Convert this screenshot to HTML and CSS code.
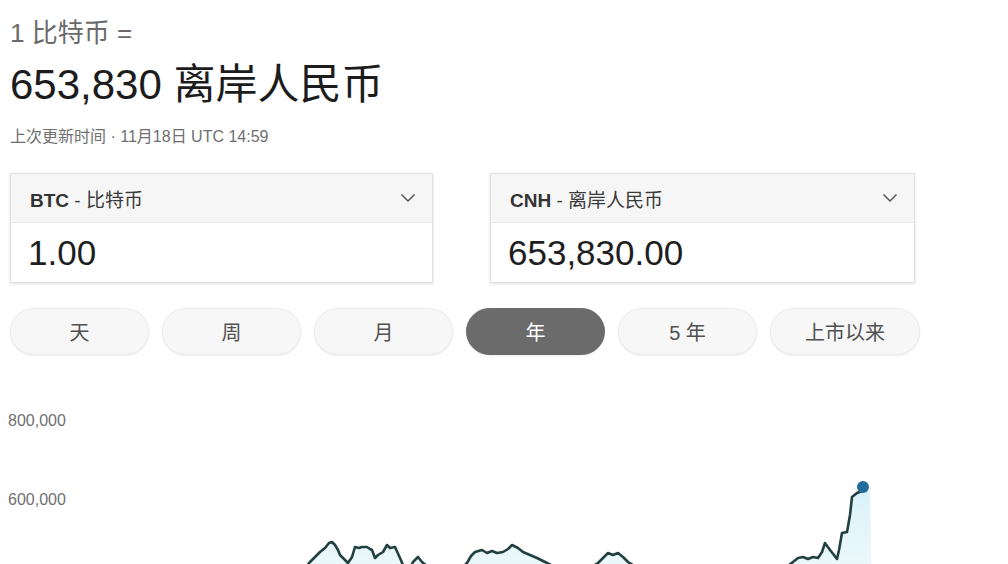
FILE: index.html
```html
<!DOCTYPE html>
<html lang="zh">
<head>
<meta charset="utf-8">
<link rel="stylesheet" href="styles.css">
</head>
<body>
<div class="page">
  <div class="rate-from">1 比特币 =</div>
  <div class="rate-to">653,830 离岸人民币</div>
  <div class="updated">上次更新时间 · 11月18日 UTC 14:59</div>

  <div class="converter">
    <div class="box box-a">
      <div class="box-head">
        <span class="cur"><b>BTC</b> - 比特币</span>
        <svg class="chev" width="16" height="10" viewBox="0 0 16 10"><polyline points="1.5,1.5 8,8 14.5,1.5" fill="none" stroke="#555" stroke-width="1.5"/></svg>
      </div>
      <div class="box-val">1.00</div>
    </div>
    <div class="box box-b">
      <div class="box-head">
        <span class="cur"><b>CNH</b> - 离岸人民币</span>
        <svg class="chev" width="16" height="10" viewBox="0 0 16 10"><polyline points="1.5,1.5 8,8 14.5,1.5" fill="none" stroke="#555" stroke-width="1.5"/></svg>
      </div>
      <div class="box-val">653,830.00</div>
    </div>
  </div>

  <div class="ranges">
    <div class="pill">天</div>
    <div class="pill">周</div>
    <div class="pill">月</div>
    <div class="pill active">年</div>
    <div class="pill">5 年</div>
    <div class="pill">上市以来</div>
  </div>

  <div class="chart">
    <div class="ylabel">800,000</div>
    <div class="ylabel">600,000</div>
    <svg class="plot" viewBox="0 400 1008 164" width="1008" height="164">
      <defs>
        <linearGradient id="fillg" x1="0" y1="0" x2="0" y2="1">
          <stop offset="0" stop-color="#d6f0f8" stop-opacity="0.9"/>
          <stop offset="1" stop-color="#e9f7fb" stop-opacity="0.6"/>
        </linearGradient>
      </defs>
      <path fill="url(#fillg)" stroke="none" d="M300,580 L305,568 L310,562 L315,557 L320,552 L325,548 L329,543 L332,542 L335,545 L338,550 L340,555 L345,560 L348,563 L352,557 L355,547 L359,548 L362,547 L367,547 L370,549 L372,550 L375,558 L378,555 L383,552 L387,545 L390,548 L395,547 L400,558 L403,565 L408,572 L413,562 L415,560 L418,557 L422,562 L427,566 L435,572 L445,575 L455,572 L462,568 L467,563 L471,556 L475,552 L482,550 L487,553 L492,551 L497,553 L503,552 L508,549 L512,545 L518,548 L523,552 L530,555 L537,558 L545,562 L553,566 L565,572 L580,572 L590,568 L598,563 L603,558 L608,553 L613,555 L618,553 L623,557 L628,562 L633,565 L645,572 L660,575 L700,578 L740,578 L770,574 L785,568 L793,562 L798,558 L803,557 L808,559 L813,557 L818,558 L822,552 L825,543 L830,550 L834,555 L837,559 L839,550 L842,533 L847,532 L850,515 L852,497 L857,493 L862,491 L870,491 L872,600 L300,600 Z"/>
      <path fill="none" stroke="#21403f" stroke-width="2.6" stroke-linejoin="round" d="M300,580 L305,568 L310,562 L315,557 L320,552 L325,548 L329,543 L332,542 L335,545 L338,550 L340,555 L345,560 L348,563 L352,557 L355,547 L359,548 L362,547 L367,547 L370,549 L372,550 L375,558 L378,555 L383,552 L387,545 L390,548 L395,547 L400,558 L403,565 L408,572 L413,562 L415,560 L418,557 L422,562 L427,566 L435,572 L445,575 L455,572 L462,568 L467,563 L471,556 L475,552 L482,550 L487,553 L492,551 L497,553 L503,552 L508,549 L512,545 L518,548 L523,552 L530,555 L537,558 L545,562 L553,566 L565,572 L580,572 L590,568 L598,563 L603,558 L608,553 L613,555 L618,553 L623,557 L628,562 L633,565 L645,572 L660,575 L700,578 L740,578 L770,574 L785,568 L793,562 L798,558 L803,557 L808,559 L813,557 L818,558 L822,552 L825,543 L830,550 L834,555 L837,559 L839,550 L842,533 L847,532 L850,515 L852,497 L857,493 L862,491"/>
      <circle cx="863" cy="487" r="6" fill="#1f6c9c"/>
    </svg>
  </div>
</div>
</body>
</html>
```
FILE: styles.css
```css
html, body {
  margin: 0;
  padding: 0;
  background: #ffffff;
  overflow: hidden;
}
body {
  font-family: "Liberation Sans", Arial, "Noto Sans CJK SC", sans-serif;
  color: #222;
}
.page {
  width: 1008px;
  height: 564px;
  padding: 18px 0 0 10px;
  box-sizing: border-box;
  overflow: hidden;
}
.rate-from {
  font-size: 26px;
  line-height: 30px;
  color: #6a6a6a;
}
.rate-to {
  margin-top: 12px;
  font-size: 42px;
  line-height: 50px;
  color: #1c1c1c;
}
.updated {
  margin-top: 17px;
  font-size: 16px;
  line-height: 20px;
  color: #6f6f6f;
}
.converter {
  margin-top: 26px;
  display: grid;
  grid-template-columns: 423px 425px;
  column-gap: 57px;
}
.box {
  height: 110px;
  box-sizing: border-box;
  border: 1px solid #e0e0e0;
  box-shadow: 0 1px 3px rgba(0, 0, 0, 0.12);
  display: flex;
  flex-direction: column;
  background: #fff;
}
.box-head {
  height: 49px;
  box-sizing: border-box;
  background: #f6f6f6;
  border-bottom: 1px solid #e9e9e9;
  display: flex;
  align-items: center;
  justify-content: space-between;
  padding: 0 16px 0 19px;
}
.cur {
  font-size: 19px;
  color: #3a3a3a;
}
.cur b {
  font-weight: bold;
  color: #333;
}
.chev {
  display: block;
}
.box-val {
  flex: 1;
  display: flex;
  align-items: center;
  padding: 0 17px;
  font-size: 35px;
  color: #1e1e1e;
}
.ranges {
  margin-top: 25px;
  display: grid;
  grid-template-columns: repeat(5, 139px) 150px;
  column-gap: 13px;
}
.pill {
  height: 47px;
  border-radius: 24px;
  background: #f7f7f7;
  border: 1px solid #ececec;
  box-sizing: border-box;
  box-shadow: 0 1px 2px rgba(0, 0, 0, 0.08);
  display: flex;
  align-items: center;
  justify-content: center;
  font-size: 20px;
  color: #505050;
}
.pill.active {
  background: #6b6b6b;
  border-color: #6b6b6b;
  color: #ffffff;
}
.chart {
  position: relative;
  margin-top: 45px;
  margin-left: -10px;
  padding: 11px 0 0 8px;
  height: 164px;
  box-sizing: border-box;
  display: flex;
  flex-direction: column;
  row-gap: 59px;
}
.ylabel {
  font-size: 16px;
  line-height: 20px;
  color: #707070;
}
.plot {
  position: absolute;
  left: 0;
  top: 0;
}
```
